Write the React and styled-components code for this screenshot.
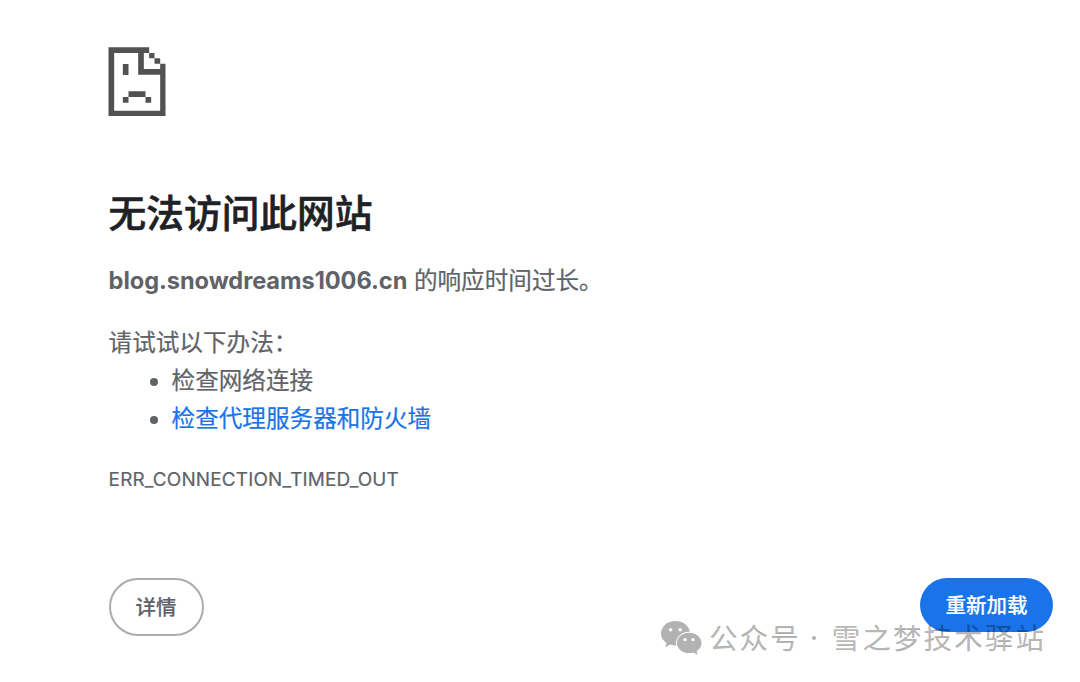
import React from 'react';
import styled, { createGlobalStyle } from 'styled-components';

const GlobalStyle = createGlobalStyle`
  * {
    box-sizing: border-box;
  }
  body {
    margin: 0;
    background: #ffffff;
    color: #5f6368;
    font-family: Inter, 'Noto Sans CJK SC', sans-serif;
    font-size: 23.6px;
    line-height: 38px;
    -webkit-text-stroke: 0.2px currentColor;
  }
`;

const Page = styled.main`
  position: relative;
  width: 1080px;
  height: 682px;
  padding: 47px 27px 0 108.6px;
  overflow: hidden;
`;

const SadPage = styled.svg`
  display: block;
  width: 58px;
  height: 69px;
  margin-left: -0.6px;
  fill: #525252;
`;

const Heading = styled.h1`
  margin: 69px 0 0;
  color: #202124;
  font-size: 37.7px;
  font-weight: 500;
  line-height: 56px;
  -webkit-text-stroke: 0.6px currentColor;
`;

const Summary = styled.p`
  margin: 21px 0 0;
  white-space: nowrap;
  strong {
    font-weight: 700;
    letter-spacing: -0.06px;
    -webkit-text-stroke: 0;
  }
`;

const Suggestions = styled.div`
  margin-top: 24px;
  p {
    margin: 0;
    line-height: 37.5px;
  }
  ul {
    margin: 0;
    padding: 0 0 0 63px;
  }
`;

const Link = styled.a`
  color: #1a73e8;
  text-decoration: none;
`;

const ErrorCode = styled.div`
  margin-top: 27.5px;
  font-size: 18.9px;
  line-height: 30px;
  letter-spacing: 0.18px;
`;

const Buttons = styled.div`
  display: flex;
  justify-content: space-between;
  align-items: flex-start;
  margin-top: 83px;
`;

const Button = styled.button`
  width: ${(props) => (props.$primary ? '133px' : '95px')};
  height: ${(props) => (props.$primary ? '54px' : '58px')};
  padding: ${(props) => (props.$primary ? '2px 0 0' : '1px 0 0')};
  border: ${(props) => (props.$primary ? 'none' : '2px solid #a9adb2')};
  border-radius: 29px;
  background: ${(props) => (props.$primary ? '#1a73e8' : '#ffffff')};
  color: ${(props) => (props.$primary ? '#ffffff' : '#5f6368')};
  font-family: inherit;
  font-size: 20.5px;
  font-weight: 500;
  line-height: 30px;
`;

const Watermark = styled.div`
  position: absolute;
  left: 661px;
  top: 615px;
  display: flex;
  align-items: center;
  height: 44px;
  color: rgba(0, 0, 0, 0.3);
  font-family: 'Noto Sans CJK SC', sans-serif;
  font-size: 28.5px;
  letter-spacing: 2.1px;
  white-space: nowrap;
  svg {
    width: 41px;
    height: 34px;
    margin: 1px 7px 0 0;
    fill: #b2b2b2;
  }
`;

const Dot = styled.span`
  width: 4px;
  height: 4px;
  margin: 2px 16px 0 11px;
  border-radius: 50%;
  background: currentColor;
`;

const WechatIcon = () => (
  <svg viewBox="0 0 41 34">
    <path d="M14.5 0C6.5 0 0 5.5 0 12.4c0 3.8 2 7.2 5.4 9.5L4.3 26.2l5-2.7c1.7.6 3.5.9 5.2.9 8 0 14.5-5.1 14.5-12S22.5 0 14.5 0z" />
    <path
      stroke="#ffffff"
      strokeWidth="2"
      paintOrder="stroke"
      d="M28.2 11.7c-6.8 0-12.2 4.6-12.2 10.2s5.4 10.2 12.2 10.2c1.5 0 3-.2 4.3-.6l4.2 2.3-1.1-3.7c3-1.900 4.900-4.800 4.900-8.200 0-5.600-5.500-10.200-12.300-10.200z"
    />
    <g fill="#ffffff">
      <circle cx="9.6" cy="8.8" r="1.8" />
      <circle cx="19.2" cy="8.8" r="1.8" />
      <circle cx="24" cy="18.7" r="1.6" />
      <circle cx="32" cy="18.7" r="1.6" />
    </g>
  </svg>
);

const App = () => (
  <>
    <GlobalStyle />
    <Page>
      <SadPage viewBox="-1.5 -1 174 207">
        <path d="M0 0H122V17H106V65H155V49H171V206H0ZM17 17V190H155V82H89V17Z" fillRule="evenodd" />
        <path d="M122 17h16v16h-16zM138 33h17v16h-17zM43 50h17v33H43zM60 132h51v17H60zM43 149h17v17H43zM111 149h17v17h-17z" />
      </SadPage>
      <Heading>无法访问此网站</Heading>
      <Summary>
        <strong>blog.snowdreams1006.cn</strong> 的响应时间过长。
      </Summary>
      <Suggestions>
        <p>请试试以下办法：</p>
        <ul>
          <li>检查网络连接</li>
          <li>
            <Link href="#">检查代理服务器和防火墙</Link>
          </li>
        </ul>
      </Suggestions>
      <ErrorCode>ERR_CONNECTION_TIMED_OUT</ErrorCode>
      <Buttons>
        <Button>详情</Button>
        <Button $primary>重新加载</Button>
      </Buttons>
      <Watermark>
        <WechatIcon />
        <span>公众号</span>
        <Dot />
        <span>雪之梦技术驿站</span>
      </Watermark>
    </Page>
  </>
);

export default App;
